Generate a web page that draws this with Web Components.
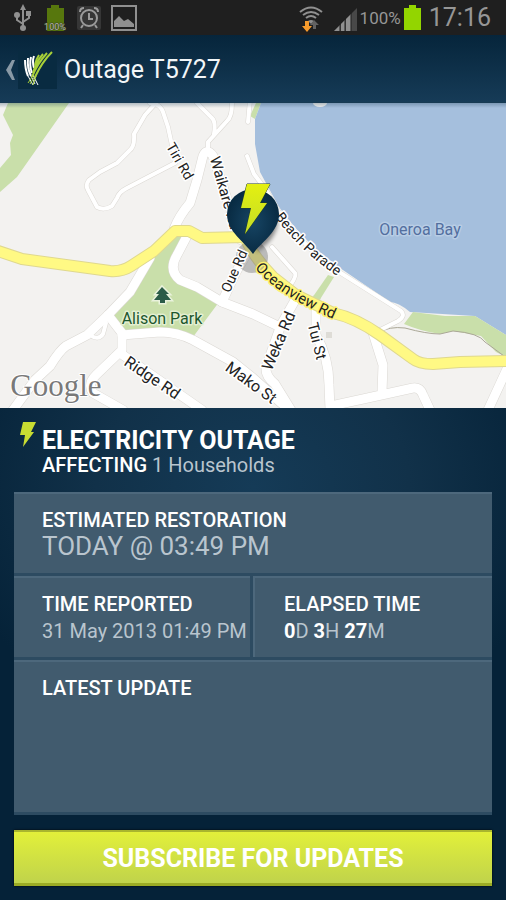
<!DOCTYPE html>
<html lang="en">
<head>
<meta charset="utf-8">
<meta name="viewport" content="width=device-width, initial-scale=1">
<title>Outage T5727</title>
<style>
	body {
		margin: 0;
		min-height: 100vh;
		background: #052238;
		font-family: Roboto, 'Liberation Sans', sans-serif;
	}
</style>
</head>
<body>
<outage-app>
	<status-bar slot="status" battery="100%" time="17:16"></status-bar>
	<app-header slot="header">Outage T5727</app-header>
	<outage-map slot="map"></outage-map>
	<outage-summary>
		<span slot="title">ELECTRICITY OUTAGE</span>
		<b slot="affecting">AFFECTING</b> 1 Households
	</outage-summary>
	<info-panel>
		<info-cell class="wide" heading="ESTIMATED RESTORATION" large>TODAY @ 03:49 PM</info-cell>
		<info-cell heading="TIME REPORTED">31 May 2013 01:49 PM</info-cell>
		<info-cell class="split" heading="ELAPSED TIME"><b>0</b>D <b>3</b>H <b>27</b>M</info-cell>
		<info-cell class="wide" heading="LATEST UPDATE"></info-cell>
	</info-panel>
	<subscribe-button>SUBSCRIBE FOR UPDATES</subscribe-button>
</outage-app>

<script>
function define(name, html, setup) {
	const template = document.createElement('template');
	template.innerHTML = html;
	customElements.define(name, class extends HTMLElement {
		constructor() {
			super();
			this.attachShadow({ mode: 'open' }).appendChild(template.content.cloneNode(true));
		}
		connectedCallback() {
			setup?.(this, this.shadowRoot);
		}
	});
}

define('outage-app', `
<style>
	:host {
		display: flex;
		flex-direction: column;
		min-height: 100vh;
	}
	main {
		flex: 1;
		display: flex;
		flex-direction: column;
		gap: 15px;
		padding: 16px 14px 14px;
		background: radial-gradient(ellipse 62% 52% at 50% 16%, #153b57, #113149 50%, #052238);
	}
</style>
<slot name="status"></slot>
<slot name="header"></slot>
<slot name="map"></slot>
<main><slot></slot></main>
`);

define('status-bar', `
<style>
	:host {
		display: flex;
		justify-content: space-between;
		align-items: center;
		height: 35px;
		padding: 0 15px 0 13px;
		box-sizing: border-box;
		background: #1f1f1f;
		color: #969696;
	}
	div {
		display: flex;
		align-items: center;
	}
	svg { display: block; }
	.left { gap: 10px; }
	.right { gap: 3px; }
	.battery {
		font-size: 17px;
	}
	.time {
		font-size: 25px;
		margin-left: 5px;
	}
</style>
<div class="left">
	<svg width="20" height="28" viewBox="0 0 20 28" fill="none" stroke="#909090" stroke-width="2">
		<path d="M10 4v20M10 20L4 16v-4M10 18l6-4v-4"/>
		<path d="M10 0l3 6H7zM13 7h5v5h-5z" fill="#909090" stroke="none"/>
		<circle cx="4" cy="11" r="3" fill="#909090" stroke="none"/>
		<circle cx="10" cy="24" r="3" fill="#909090" stroke="none"/>
	</svg>
	<svg width="24" height="28" viewBox="0 0 24 28">
		<path d="M8 1h8v3h5v23H4V4h4z" fill="#57770d"/>
		<text x="12" y="26" text-anchor="middle" font-size="9" fill="#b4b4ac" stroke="#3c4a20" stroke-width="1" paint-order="stroke">100%</text>
	</svg>
	<svg width="24" height="28" viewBox="0 0 24 28" fill="none" stroke="#9b9b9b" stroke-width="2">
		<rect y="2" width="24" height="24" rx="2" fill="#363636" stroke="none"/>
		<circle cx="12" cy="14" r="8"/>
		<path d="M12 9v6h4M3 8q0-4 4-4M21 8q0-4-4-4M6 21l-2 3M18 21l2 3"/>
	</svg>
	<svg width="26" height="28" viewBox="0 0 26 28">
		<rect x="1" y="2" width="24" height="24" fill="none" stroke="#909090" stroke-width="2"/>
		<path d="M3 23v-6l5-5 5 5 4-2 6 5v3z" fill="#909090"/>
	</svg>
</div>
<div class="right">
	<svg width="24" height="28" viewBox="0 0 24 28" fill="none" stroke="#909090" stroke-width="2">
		<path d="M1 8q11-9 22 0M4 11q8-6 16 0M7 14q5-4 10 0"/>
		<path d="M9 17q3-2 6 0l-3 3z" fill="#909090" stroke="none"/>
		<path d="M6 17h4v5h3l-5 6-5-6h3z" fill="#f79b2c" stroke="none"/>
		<path d="M14 25v-4h-3l4-5 5 5h-3v4z" fill="#626262" stroke="none"/>
	</svg>
	<svg width="31" height="28" viewBox="-4 0 31 28">
		<path d="M4 27L27 4v23z" fill="#484848"/>
		<path d="M4 27l6-6v6zM11 20l4-4v11h-4zM16 15l5-5v17h-5z" fill="#909090"/>
		<path d="M10 19v8M15 14v13M21 9v18" stroke="#1f1f1f"/>
	</svg>
	<span class="battery"></span>
	<svg width="17" height="28" viewBox="0 0 17 28">
		<path d="M5 1h7v3h5v22H0V4h5z" fill="#93d500"/>
	</svg>
	<span class="time"></span>
</div>
`, (host, root) => {
	root.querySelector('.battery').textContent = host.getAttribute('battery');
	root.querySelector('.time').textContent = host.getAttribute('time');
});

define('app-header', `
<style>
	:host {
		display: flex;
		align-items: center;
		height: 68px;
		padding: 2px 5px 0;
		box-sizing: border-box;
		border-bottom: 1px solid #173a53;
		background: linear-gradient(#06253b, #163b57);
		color: #f2f6f8;
	}
	a {
		display: flex;
		align-items: center;
		gap: 2px;
	}
	h1 {
		margin: 0 0 0 7px;
		font-size: 25px;
		font-weight: 400;
		line-height: 32px;
	}
</style>
<a href="#" aria-label="Back">
	<svg width="11" height="22" viewBox="0 0 11 22">
		<path d="M10 1L7 1 1 11 7 21h3L6 11z" fill="#8999a6"/>
	</svg>
	<svg width="39" height="38" viewBox="0 0 39 38" fill="none">
		<rect width="39" height="38" fill="#092b41"/>
		<g stroke="#fff" stroke-width="2">
			<path d="M7 9Q7 18 10 25M10 7Q9 17 13 25M13 6Q11 14 14 22M16 5Q14 10 16 17"/>
			<path d="M10 25l5 9M13 25l4 8M15 24l5 10" stroke-width="1"/>
		</g>
		<g stroke="#a8d038" stroke-width="2">
			<path d="M21 4Q18 8 17 14M25 3Q18 11 15 22M29 2Q19 13 14 26M34 1Q24 11 17 26"/>
			<path d="M14 26l-4 6M17 25l-5 8M18 25l-3 9" stroke-width="1"/>
		</g>
	</svg>
</a>
<h1><slot></slot></h1>
`);

define('outage-map', `
<style>
	:host { display: block; background: #f3f2f0; }
	svg { display: block; width: 100%; height: auto; }
	.road { fill: none; stroke-linejoin: round; stroke-linecap: round; }
	.thin { stroke-width: var(--thin); }
	.mid { stroke-width: var(--mid); }
	.edge { --thin: 5px; --mid: 10px; stroke: #dbd8d3; }
	.fill { --thin: 4px; --mid: 9px; stroke: #fff; }
	text {
		font-size: 15px;
		fill: #222;
		stroke: #fff;
		stroke-width: 3px;
		stroke-linejoin: round;
		paint-order: stroke;
		text-anchor: middle;
	}
	.small { font-size: 14px; }
	.big { font-size: 16px; }
	.park { fill: #1d572e; stroke: #e3efd2; }
	.water { fill: #536f9f; stroke: #b8cde5; }
	.highway { stroke: #fff372; }
	.logo {
		font: 31px 'Liberation Serif', serif;
		fill: #797979;
		stroke-width: 2px;
	}
</style>
<svg viewBox="0 103 506 305" role="img" aria-label="Map of Oneroa Bay">
	<defs>
		<g id="roads" class="road">
			<g class="thin">
				<path d="M150 103L155 104 145 115 134 134Q135 147 129 151L117 163 100 172 89 180Q85 185 88 190L97 207Q104 211 112 206L117 198Q119 192 127 188L175 163"/>
				<path d="M155 104Q161 106 163 112L168 127 173 150"/>
				<path d="M197 103L212 118Q216 122 214 134M232 103Q232 117 227 121L208 142V150"/>
				<path d="M250 100L248 122M247 156L254 174 266 190 280 214Q305 248 336 270L401 311Q406 316 398 321L378 331"/>
				<path d="M272 247L295 273Q297 277 288 288M106 323L103 334Q98 341 90 335"/>
			</g>
			<g class="mid">
				<path d="M174 229Q179 216 190 203L197 180 203 156Q207 147 213 156L228 202 241 240"/>
				<path d="M187 236L177 255Q168 270 180 280L197 287 222 302 253 314 280 327"/>
				<path d="M249 250L236 272 222 302"/>
				<path d="M150 258L130 292 108 315 87 335 66 346Q60 350 50 366L35 380 13 410"/>
				<path d="M108 315L122 333V350L96 375Q87 384 93 393L123 410"/>
				<path d="M122 335L160 332Q177 332 193 340L233 362 253 378 280 402 290 410"/>
				<path d="M120 353L202 410"/>
				<path d="M298 295L281 325 266 367Q265 376 275 384L291 410"/>
				<path d="M316 300V335Q329 358 329 385L330 409"/>
				<path d="M373 333L383 365 382 392M331 406L363 399 413 388Q420 387 423 395L430 410M507 369L488 410"/>
			</g>
		</g>
		<path id="highway" class="road" d="M-5 250L22 259 110 271Q122 272 131 266L154 251 175 231H189L202 238 245 237Q252 255 273 277L296 295 333 313Q356 318 380 335L413 359Q419 364 433 364L460 362 510 361"/>
		<path id="beach" d="M273 214Q298 250 340 278"/>
		<path id="ocean" d="M252 264Q272 293 338 321"/>
		<linearGradient id="bolt" x1="0" y1="0" x2="0" y2="1">
			<stop offset="0" stop-color="#e4f010"/>
			<stop offset="1" stop-color="#c3dc28"/>
		</linearGradient>
		<radialGradient id="navy">
			<stop offset="0" stop-color="#174564"/>
			<stop offset="1" stop-color="#082b43"/>
		</radialGradient>
		<linearGradient id="shade" x1="0" y1="0" x2="0" y2="1">
			<stop offset="0" stop-color="#173a53" stop-opacity="0.3"/>
			<stop offset="1" stop-color="#173a53" stop-opacity="0"/>
		</linearGradient>
		<filter id="soft"><feGaussianBlur stdDeviation="2"/></filter>
	</defs>
	<path d="M0 100H506V410H0z" fill="#f3f2f0"/>
	<g fill="#c9dfaa">
		<path d="M8 103L3 115 13 135 10 143 11 155 0 168V192L17 177 69 103z"/>
		<path d="M172 232L187 236 174 265 180 280 219 302 193 337 160 330 124 331 112 317 132 290z"/>
		<path d="M250 116L256 103H261L255 119z"/>
	</g>
	<path d="M261 103L255 119V144L260 172 279 207Q300 236 321 253L340 268 390 302Q398 302 410 312L475 316 506 335V103z" fill="#a5bfdd"/>
	<path d="M413 312L404 324Q420 331 440 334L453 331 481 336 496 352 506 357V335L475 316 445 316z" fill="#c9dfaa"/>
	<path d="M378 333Q389 326 405 328 427 334 440 334L453 331Q479 333 485 342L504 356" fill="none" stroke="#aaa796"/>
	<ellipse cx="320" cy="103" rx="7" ry="4" fill="#f3f2f0"/>
	<path d="M326 332h6v6h-6z" fill="#dedcd6"/>
	<g class="edge"><use href="#roads"/></g>
	<g class="fill"><use href="#roads"/></g>
	<path d="M328 275L334 277 319 301 312 298z" fill="#c9dfaa"/>
	<use href="#highway" stroke="#dfd88f" stroke-width="12"/>
	<use href="#highway" stroke="#fff984" stroke-width="10"/>
	<path d="M162 287l7 7h-3l5 6h-6v3h-5v-3h-6l5-6h-3z" fill="#2b5c48" stroke="#e9f2dc" stroke-width="3" paint-order="stroke"/>

	<circle cx="252" cy="257" r="16" fill="#777" opacity="0.45"/>
	<text class="small" transform="translate(180 161) rotate(60)" y="5">Tiri Rd</text>
	<text transform="translate(225 193) rotate(74)" y="5">Waikare Rd</text>
	<text class="small"><textPath href="#beach" startOffset="50%">Beach Parade</textPath></text>
	<text class="highway"><textPath href="#ocean" startOffset="50%">Oceanview Rd</textPath></text>
	<text class="small" transform="translate(234 271) rotate(-66)" y="5">Oue Rd</text>
	<text class="big" transform="translate(279 341) rotate(-67)" y="5">Weka Rd</text>
	<text transform="translate(317 341) rotate(76)" y="5">Tui St</text>
	<text class="big" transform="translate(152 378) rotate(34)" y="5">Ridge Rd</text>
	<text class="big" transform="translate(251 383) rotate(36)" y="5">Mako St</text>
	<text class="big park" x="162" y="324">Alison Park</text>
	<text class="big water" x="420" y="235">Oneroa Bay</text>
	<text class="logo" x="56" y="396">Google</text>

	<path d="M256 252Q281 237 277 213L267 196z" opacity="0.45" filter="url(#soft)"/>
	<path d="M253 254C245 242 227 232 227 214A26 25 0 0 1 279 214C279 232 261 242 253 254z" fill="url(#navy)"/>
	<path d="M247 184H270L260 203H267L245 234 251 208H241z" fill="url(#bolt)" stroke="#243f28" paint-order="stroke"/>
	<path d="M0 103H506V108H0z" fill="url(#shade)"/>
</svg>
`);

define('outage-summary', `
<style>
	:host {
		display: flex;
		align-items: start;
		padding-left: 6px;
		min-height: 53px;
		color: #b9c5ce;
		font-size: 20px;
		line-height: 24px;
	}
	svg {
		flex: none;
		margin-top: -3px;
	}
	h2 {
		margin: 4px 0 0;
		color: #fff;
		font-size: 25px;
		font-weight: 700;
		line-height: 25px;
	}
	p { margin: 0; }
	::slotted(b) { color: #fff; font-weight: 500; }
</style>
<svg width="22" height="28" viewBox="0 0 22 28">
	<path d="M3 1H16L11 11H14L3 26 5 14H0z" fill="#c8dc32"/>
</svg>
<div>
	<h2><slot name="title"></slot></h2>
	<p><slot name="affecting"></slot> <slot></slot></p>
</div>
`);

define('info-panel', `
<style>
	:host {
		flex: 1;
		display: grid;
		grid-template-columns: 1fr 1fr;
		grid-template-rows: auto auto 1fr;
	}
	::slotted(.wide) { grid-column: span 2; }
	::slotted(.split) { box-shadow: -3px 0 #2d4b61, inset 2px 0 #4d687c; }
</style>
<slot></slot>
`);

define('info-cell', `
<style>
	:host {
		display: block;
		padding: 13px 0 12px 28px;
		border-top: 2px solid #4d687c;
		border-bottom: 3px solid #2d4b61;
		background: #415b6e;
		color: #b9c5ce;
		font-size: 20px;
		line-height: 28px;
		white-space: nowrap;
	}
	:host(.split) { padding-left: 31px; }
	:host([large]) {
		padding-bottom: 14px;
		font-size: 26px;
		line-height: 26px;
	}
	h3 {
		margin: 0;
		color: #fff;
		font-size: 20px;
		font-weight: 500;
		line-height: 26px;
	}
	::slotted(b) { color: #fff; font-weight: 700; }
</style>
<h3></h3>
<slot></slot>
`, (host, root) => {
	root.querySelector('h3').textContent = host.getAttribute('heading');
});

define('subscribe-button', `
<style>
	:host { display: block; }
	button {
		display: block;
		width: 100%;
		padding: 13px 8px 11px;
		border: 0;
		border-top: 2px solid #a9b62e;
		border-bottom: 3px solid #9bab24;
		background: linear-gradient(#e2f03a, #c0d34b);
		box-shadow: 0 0 2px #000;
		color: #fff;
		font: 700 25px/27px Roboto, 'Liberation Sans', sans-serif;
		cursor: pointer;
	}
</style>
<button type="button"><slot></slot></button>
`);
</script>
</body>
</html>
